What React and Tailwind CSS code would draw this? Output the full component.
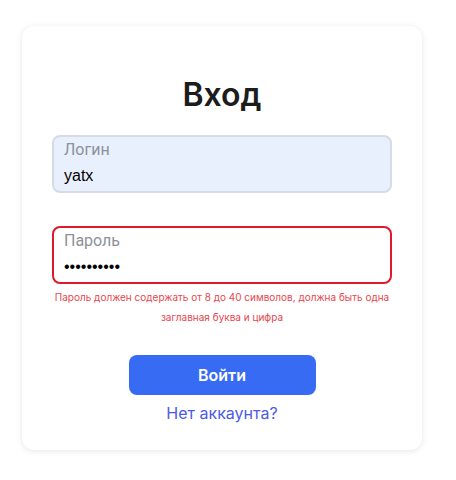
import React, { useState } from 'react';

const Field = ({ label, value, type, error, filled }) => (
  <div
    className={`flex flex-col h-[58px] rounded-lg border-2 px-[10px] pt-[2px] ${
      error ? 'border-[#dc1a2a] bg-white' : filled ? 'border-[#d5dce6] bg-[#e8f0fe]' : 'border-[#d5dce6] bg-white'
    }`}
  >
    <span className="text-[16px] leading-[22px] text-[#8e9199] font-['Roboto',sans-serif]">{label}</span>
    <input
      type={type}
      defaultValue={value}
      className="mt-[3px] w-full bg-transparent outline-none text-[16px] leading-[24px] text-black font-['Liberation_Sans',Arial,sans-serif]"
    />
  </div>
);

export default function App() {
  const [login] = useState('yatx');
  return (
    <div className="w-[456px] h-[480px] bg-white font-['Inter',sans-serif]">
      <div className="ml-[22px] pt-[26px]">
        <div className="w-[400px] h-[424px] rounded-xl bg-white shadow-[0_1px_6px_rgba(0,0,0,0.1)] px-[30px] pt-[49px] flex flex-col">
          <h1 className="text-center text-[32px] leading-[40px] font-semibold text-[#1c1c1c]">Вход</h1>
          <div className="mt-[20px]">
            <Field label="Логин" value={login} type="text" filled />
          </div>
          <div className="mt-[33px]">
            <Field label="Пароль" value="abcdefghij" type="password" error />
          </div>
          <p className="mt-[3px] text-center text-[10px] leading-[20px] text-[#e6474f]">
            Пароль должен содержать от 8 до 40 символов, должна быть одна заглавная буква и цифра
          </p>
          <div className="flex flex-col items-center mt-[28px]">
            <button className="w-[187px] h-[40px] rounded-lg bg-[#386bf4] text-white text-[16px] font-semibold">
              Войти
            </button>
            <a href="#" className="mt-[7px] text-[16px] leading-[22px] text-[#4c5be6]">
              Нет аккаунта?
            </a>
          </div>
        </div>
      </div>
    </div>
  );
}
